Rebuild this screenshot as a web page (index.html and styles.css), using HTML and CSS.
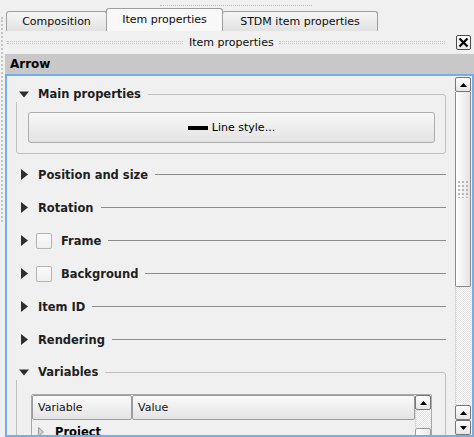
FILE: index.html
```html
<!DOCTYPE html>
<html>
<head>
<meta charset="utf-8">
<link rel="stylesheet" href="styles.css">
</head>
<body>
<div class="splitter-grip"></div>
<div class="top-grip"></div>
<div class="tabs">
  <div class="tab tab-comp">Composition</div>
  <div class="tab tab-item active">Item properties</div>
  <div class="tab tab-stdm">STDM item properties</div>
</div>
<div class="dock-title">
  <div class="dots dots-left"></div>
  <span class="dock-label">Item properties</span>
  <div class="dots dots-right"></div>
  <div class="close-btn"><svg width="11" height="11" viewBox="0 0 11 11"><path d="M1.5 1.5L9.5 9.5M9.5 1.5L1.5 9.5" stroke="#000" stroke-width="2.2"/></svg></div>
</div>
<div class="item-header">Arrow</div>
<div class="frame">
  <div class="content">
    <div class="group">
      <div class="group-head">
        <span class="tri"><svg width="10" height="7" viewBox="0 0 10 7"><path d="M0 0.5H10L5 6.5Z" fill="#2e2e2e"/></svg></span>
        <span class="title">Main properties</span>
      </div>
      <div class="btn-line"><span class="line-icon"></span><span>Line style...</span></div>
    </div>

    <div class="section first">
      <span class="tri"><svg class="tri-r" width="7" height="11" viewBox="0 0 7 11"><path d="M0 0L7 5.5L0 11Z" fill="#2e2e2e"/></svg></span>
      <span class="title">Position and size</span><span class="line"></span>
    </div>
    <div class="section">
      <span class="tri"><svg class="tri-r" width="7" height="11" viewBox="0 0 7 11"><path d="M0 0L7 5.5L0 11Z" fill="#2e2e2e"/></svg></span>
      <span class="title">Rotation</span><span class="line"></span>
    </div>
    <div class="section">
      <span class="tri"><svg class="tri-r" width="7" height="11" viewBox="0 0 7 11"><path d="M0 0L7 5.5L0 11Z" fill="#2e2e2e"/></svg></span>
      <span class="check"></span>
      <span class="title">Frame</span><span class="line"></span>
    </div>
    <div class="section">
      <span class="tri"><svg class="tri-r" width="7" height="11" viewBox="0 0 7 11"><path d="M0 0L7 5.5L0 11Z" fill="#2e2e2e"/></svg></span>
      <span class="check"></span>
      <span class="title">Background</span><span class="line"></span>
    </div>
    <div class="section">
      <span class="tri"><svg class="tri-r" width="7" height="11" viewBox="0 0 7 11"><path d="M0 0L7 5.5L0 11Z" fill="#2e2e2e"/></svg></span>
      <span class="title">Item ID</span><span class="line"></span>
    </div>
    <div class="section">
      <span class="tri"><svg class="tri-r" width="7" height="11" viewBox="0 0 7 11"><path d="M0 0L7 5.5L0 11Z" fill="#2e2e2e"/></svg></span>
      <span class="title">Rendering</span><span class="line"></span>
    </div>

    <div class="group group-vars">
      <div class="group-head">
        <span class="tri"><svg width="10" height="7" viewBox="0 0 10 7"><path d="M0 0.5H10L5 6.5Z" fill="#2e2e2e"/></svg></span>
        <span class="title">Variables</span>
      </div>
      <div class="table">
        <div class="table-main">
          <div class="thead">
            <div class="th th-var">Variable</div>
            <div class="th th-val">Value</div>
          </div>
          <div class="trow">
            <svg class="row-tri" width="6" height="10" viewBox="0 0 6 10"><path d="M0.5 0.5L5.5 5L0.5 9.5Z" fill="#cfcfcf" stroke="#9a9a9a" stroke-width="1"/></svg>
            <span class="row-name">Project</span>
          </div>
        </div>
        <div class="table-scroll">
          <div class="sb-btn"><svg width="7" height="4" viewBox="0 0 7 4"><path d="M0 4L3.5 0L7 4Z" fill="#000"/></svg></div>
          <div class="sb-track small"></div>
          <div class="sb-thumb-small"></div>
        </div>
      </div>
    </div>
  </div>
  <div class="vscroll">
    <div class="sb-btn"><svg width="7" height="4" viewBox="0 0 7 4"><path d="M0 4L3.5 0L7 4Z" fill="#000"/></svg></div>
    <div class="sb-thumb"><div class="grip"></div></div>
    <div class="sb-track"></div>
    <div class="sb-btn"><svg width="7" height="4" viewBox="0 0 7 4"><path d="M0 4L3.5 0L7 4Z" fill="#000"/></svg></div>
    <div class="sb-btn"><svg width="7" height="4" viewBox="0 0 7 4"><path d="M0 0L3.5 4L7 0Z" fill="#000"/></svg></div>
  </div>
</div>
</body>
</html>
```

FILE: styles.css
```css
* { box-sizing: border-box; }

html, body {
  margin: 0;
  padding: 0;
}

body {
  width: 474px;
  height: 437px;
  overflow: hidden;
  background: #f0f0f0;
  font-family: "DejaVu Sans", sans-serif;
  font-size: 11px;
  color: #141414;
  position: relative;
}

.splitter-grip {
  position: absolute;
  left: 1px;
  top: 17px;
  width: 2px;
  height: 205px;
  border-left: 2px dotted #c6c6c6;
}

.top-grip {
  width: 152px;
  height: 6px;
  margin-left: 160px;
  border-bottom: 1px dotted #bdbdbd;
}

.tabs {
  display: flex;
  align-items: flex-end;
  padding: 2px 0 0 6px;
  height: 25px;
}

.tab {
  height: 20px;
  border: 1px solid #9e9e9e;
  border-bottom: none;
  border-radius: 3px 3px 0 0;
  background: linear-gradient(#f6f6f6, #e2e2e2);
  display: flex;
  align-items: center;
  justify-content: center;
  line-height: 1;
  color: #0c0c0c;
}

.tab-comp { width: 101px; }
.tab-item { width: 117px; margin-left: -1px; }
.tab-stdm { width: 156px; margin-left: -1px; }

.tab.active {
  height: 23px;
  background: #f8f8f8;
  padding-bottom: 2px;
  position: relative;
}

.dock-title {
  display: flex;
  align-items: center;
  height: 23px;
  padding-left: 7px;
}

.dots {
  height: 3px;
  border-top: 1px dotted #c2c2c2;
  border-bottom: 1px dotted #c2c2c2;
}

.dots-left { width: 176px; margin-right: 6px; }
.dots-right { flex: 1; margin-left: 5px; margin-right: 11px; }

.dock-label { white-space: nowrap; color: #0c0c0c; }

.close-btn {
  width: 15px;
  height: 15px;
  margin-right: 3px;
  border: 1px solid #4a4a4a;
  border-radius: 2px;
  background: linear-gradient(#ffffff, #e8e8e8);
  display: flex;
  align-items: center;
  justify-content: center;
}

.item-header {
  margin-left: 5px;
  height: 20px;
  line-height: 20px;
  background: #c8c8c8;
  padding-left: 5px;
  font-weight: bold;
  font-size: 12px;
  color: #000;
}

.frame {
  margin-left: 5px;
  width: 469px;
  height: 363px;
  border: 2px solid #74aee9;
  display: flex;
  overflow: hidden;
}

.content {
  width: 448px;
  padding: 18px 9px 0 9px;
  overflow: hidden;
}

.group {
  border: 1px solid #c0c0c0;
  border-radius: 3px;
  padding: 0 10px 10px 11px;
}

.group-head {
  margin: -9px 0 0 -12px;
  height: 16px;
  width: fit-content;
  display: flex;
  align-items: center;
  background: #f0f0f0;
  padding: 0 7px 0 3px;
}

.tri {
  width: 10px;
  margin-right: 9px;
  display: flex;
  align-items: center;
}

.tri-r { margin-left: 2px; }

.title {
  font-weight: bold;
  font-size: 11.5px;
  color: #1e1e1e;
  white-space: nowrap;
}

.btn-line {
  margin-top: 10px;
  height: 31px;
  border: 1px solid #adadad;
  border-radius: 3px;
  background: linear-gradient(#f7f7f7, #e3e3e3);
  display: flex;
  align-items: center;
  justify-content: center;
  gap: 4px;
  color: #000;
}

.line-icon {
  width: 20px;
  height: 4px;
  background: #000;
}

.section {
  height: 33px;
  display: flex;
  align-items: center;
  padding-left: 3px;
}

.section.first { margin-top: 4px; }

.section .line {
  flex: 1;
  height: 1px;
  background: #8d8d8d;
  margin-left: 7px;
}

.check {
  width: 16px;
  height: 16px;
  margin-left: -2px;
  margin-right: 9px;
  border: 1px solid #b3b3b3;
  border-radius: 2px;
  background: linear-gradient(#fafafa, #f0f0f0);
}

.group-vars {
  margin-top: 16px;
  height: 120px;
  padding: 0 13px 0 14px;
}

.group-vars .group-head { margin-left: -15px; }

.table {
  margin-top: 14px;
  border: 1px solid #a9a9a9;
  border-radius: 2px;
  display: flex;
  height: 60px;
}

.table-main { flex: 1; }

.thead {
  display: flex;
  height: 25px;
}

.th {
  height: 25px;
  border: 1px solid #9c9c9c;
  border-radius: 2px;
  background: linear-gradient(#fafafa, #e4e4e4);
  display: flex;
  align-items: center;
  padding-left: 5px;
  color: #111;
}

.th-var { width: 100px; }
.th-val { flex: 1; }

.trow {
  height: 24px;
  display: flex;
  align-items: center;
  padding-left: 6px;
}

.row-tri { margin-right: 11px; }

.row-name { font-weight: bold; font-size: 11.5px; color: #000; }

.table-scroll {
  width: 16px;
  display: flex;
  flex-direction: column;
}

.vscroll {
  width: 16px;
  margin-right: 1px;
  display: flex;
  flex-direction: column;
  padding-top: 1px;
}

.sb-btn {
  height: 15px;
  flex: none;
  border: 1px solid #767676;
  border-radius: 2px;
  background: linear-gradient(#ffffff, #e6e6e6);
  display: flex;
  align-items: center;
  justify-content: center;
}

.sb-thumb {
  height: 195px;
  flex: none;
  border: 1px solid #8a8a8a;
  border-top: none;
  border-radius: 0 0 2px 2px;
  background: linear-gradient(90deg, #ffffff, #e4e4e4);
  display: flex;
  align-items: center;
  justify-content: center;
}

.grip {
  width: 12px;
  height: 18px;
  background-image: radial-gradient(circle, #b8b8b8 0.9px, transparent 1.1px);
  background-size: 4px 4px;
}

.sb-track {
  flex: 1;
  background-color: #ffffff;
  background-image: repeating-conic-gradient(#e2e2e2 0 25%, #ffffff 0 50%);
  background-size: 2px 2px;
  border-left: 1px dotted #d0d0d0;
}

.sb-track.small { flex: none; height: 18px; }

.sb-thumb-small {
  flex: 1;
  border: 1px solid #9a9a9a;
  border-radius: 2px 2px 0 0;
  background: linear-gradient(90deg, #ffffff, #e8e8e8);
}
```
